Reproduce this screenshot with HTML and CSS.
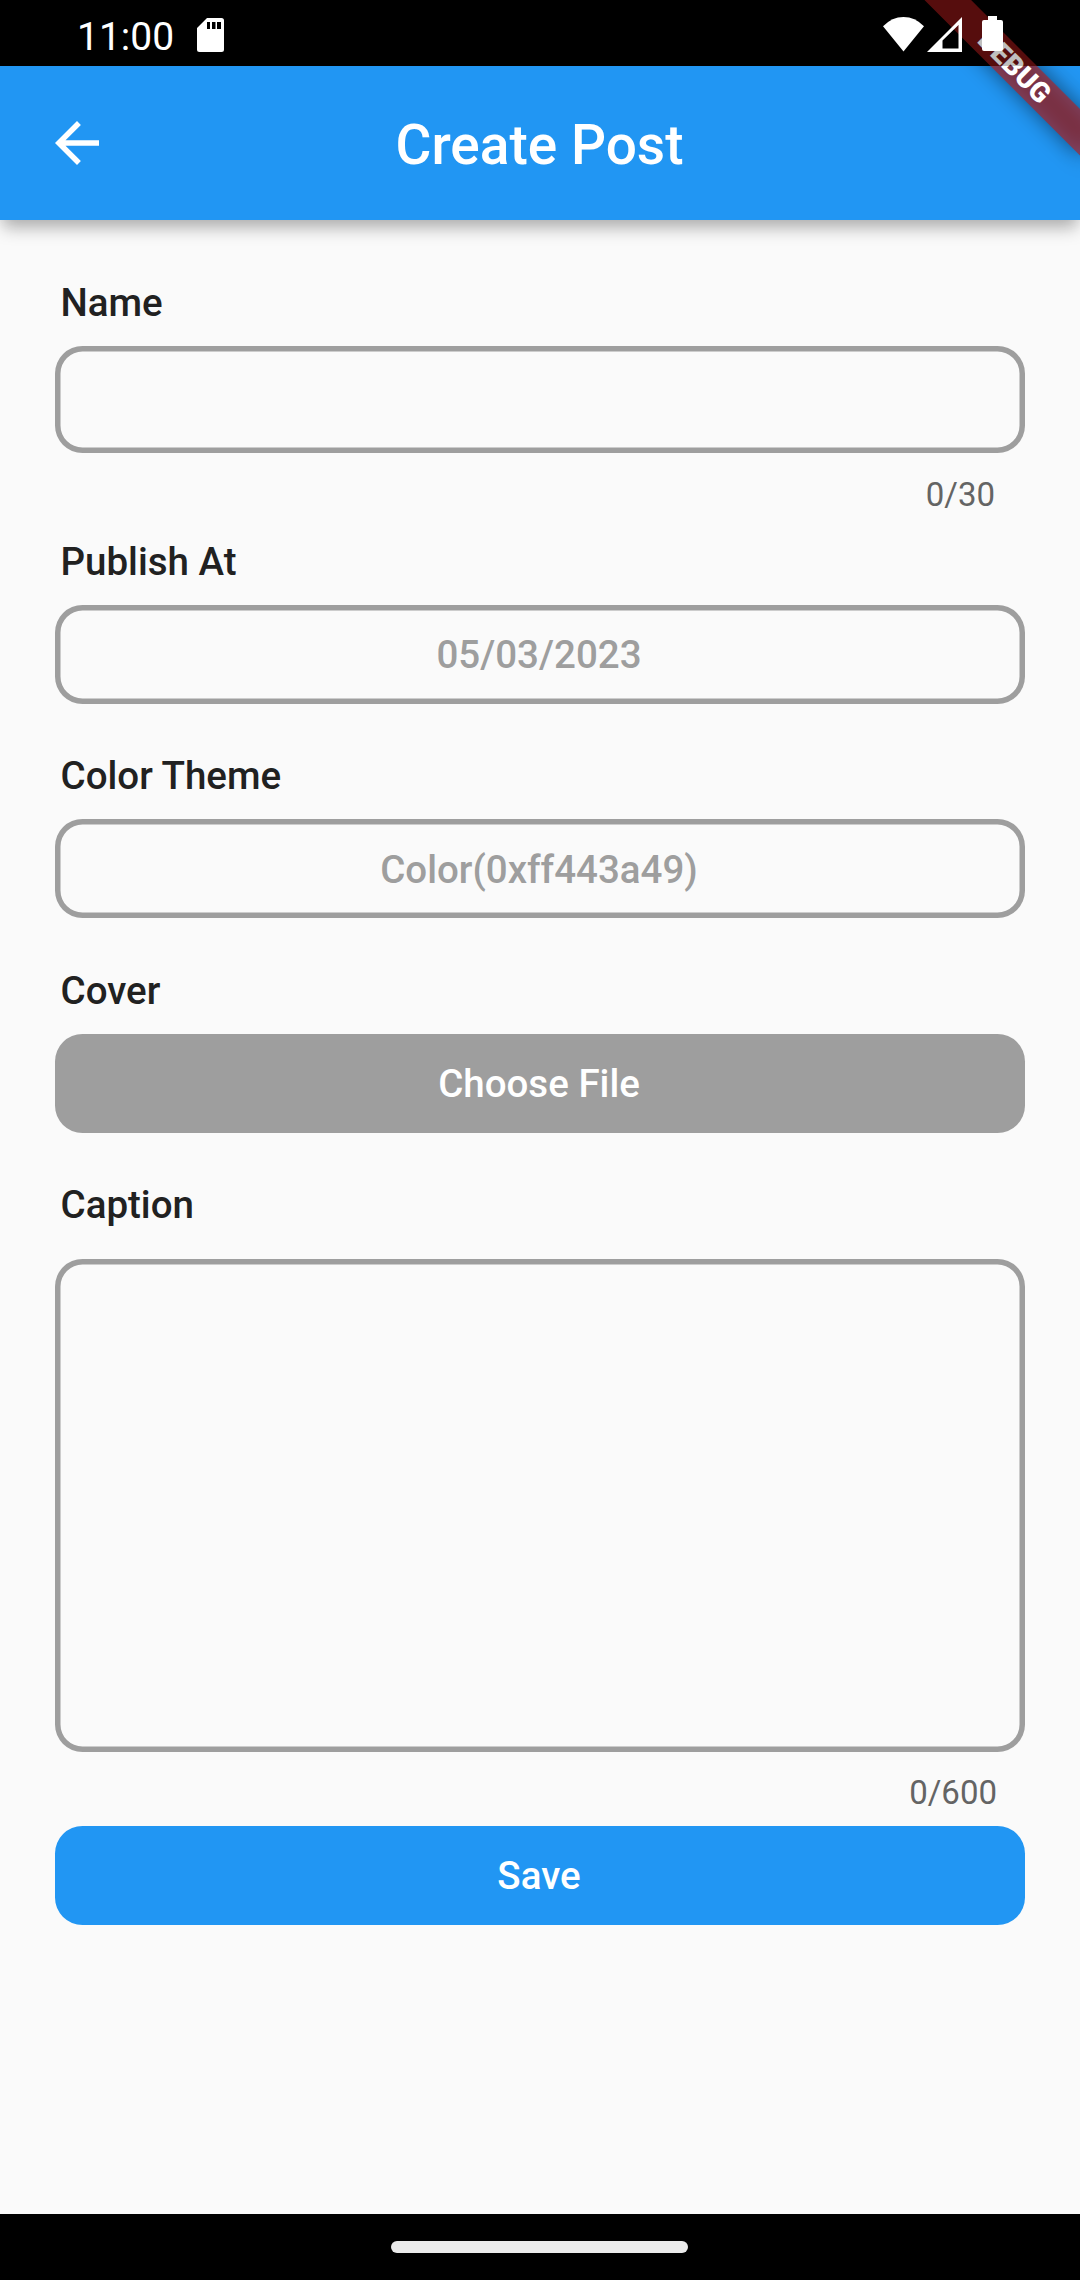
FILE: index.html
```html
<!DOCTYPE html>
<html lang="en">
<head>
<meta charset="utf-8">
<title>Create Post</title>
<link rel="stylesheet" href="styles.css">
</head>
<body>
<div class="screen">
  <div class="status-bar">
    <span class="clock">11:00</span>
    <svg class="sd" width="27" height="34" viewBox="0 0 27 34"><path fill="#fff" fill-rule="evenodd" d="M10 0H24.500Q27 0 27 2.500V31.500Q27 34 24.500 34H2.500Q0 34 0 31.500V10ZM10 4V11H13V4ZM15 4V11H18.500V4ZM20 4V11H24V4Z"/></svg>
    <svg class="wifi" width="41" height="35" viewBox="0 0 41 35"><path fill="#fff" d="M0 9.300Q9 0 20.500 0T41 9.300L20.500 34.500Z"/></svg>
    <svg class="signal" width="35" height="35" viewBox="0 0 35 35"><path fill="#fff" fill-rule="evenodd" d="M0 35L35 0V35ZM15.500 23.500V31.500H31.500V8Z"/></svg>
    <svg class="battery" width="21" height="35" viewBox="0 0 21 35"><path fill="#fff" d="M6 0H15V4H19Q21 4 21 6V33Q21 35 19 35H2Q0 35 0 33V6Q0 4 2 4H6Z"/></svg>
  </div>
  <header class="app-bar">
    <svg class="back" width="66" height="66" viewBox="0 0 24 24"><path fill="#fff" d="M20 11H7.830l5.590-5.590L12 4l-8 8 8 8 1.410-1.410L7.830 13H20v-2z"/></svg>
    <h1 class="title">Create Post</h1>
  </header>
  <main class="form">
    <section class="field">
      <label class="label">Name</label>
      <div class="box box-input"></div>
      <div class="counter">0/30</div>
    </section>
    <section class="field field-date">
      <label class="label">Publish At</label>
      <div class="box">05/03/2023</div>
    </section>
    <section class="field field-color">
      <label class="label">Color Theme</label>
      <div class="box box-color">Color(0xff443a49)</div>
    </section>
    <section class="field field-cover">
      <label class="label">Cover</label>
      <div class="button">Choose File</div>
    </section>
    <section class="field field-caption">
      <label class="label">Caption</label>
      <div class="box box-area"></div>
      <div class="counter counter-area">0/600</div>
    </section>
    <div class="button button-save">Save</div>
  </main>
  <footer class="nav-bar"><div class="pill"></div></footer>
  <div class="banner-clip">
    <div class="banner">
      <div class="banner-shadow"></div>
      <div class="banner-face">DEBUG</div>
    </div>
  </div>
  <div class="status-scrim"></div>
</div>
</body>
</html>
```
FILE: styles.css
```css
* { box-sizing: border-box; }
body { margin: 0; font-family: Roboto, sans-serif; background: #fafafa; }
svg { display: block; }

.screen {
  position: relative;
  display: flex;
  flex-direction: column;
  width: 1080px;
  height: 2280px;
  overflow: hidden;
  background: #fafafa;
}

.status-bar {
  display: flex;
  flex: none;
  align-items: flex-start;
  height: 66px;
  background: #000;
  color: #fff;
}
.clock { width: 120px; margin: 14px 0 0 77px; font-size: 39px; line-height: 46px; }
.status-bar svg { position: relative; z-index: 3; }
.sd { margin-top: 18px; }
.wifi { margin: 17px 0 0 659px; }
.signal { margin: 17px 0 0 3px; }
.battery { margin: 16px 0 0 20px; }

.app-bar {
  display: flex;
  flex: none;
  align-items: center;
  height: 154px;
  padding: 0 111px 0 44px;
  background: #2196f3;
  box-shadow: 0 11px 16px -3px rgba(0, 0, 0, .28), 0 2px 14px rgba(0, 0, 0, .06);
}
.title {
  flex: 1;
  margin: 0;
  padding-top: 4px;
  color: #fff;
  font-size: 55px;
  font-weight: 500;
  line-height: 64px;
  text-align: center;
}

.form { display: flex; flex: 1; flex-direction: column; padding: 60px 55px 0; }
.field { display: flex; flex-direction: column; }
.field-date { height: 214px; }
.field-color { height: 215px; }
.field-cover { height: 214px; }
.label {
  margin: 0 0 21px 5.5px;
  color: #212121;
  font-size: 38.5px;
  font-weight: 500;
  line-height: 45px;
}
.box, .button {
  display: flex;
  flex: none;
  align-items: center;
  justify-content: center;
  height: 99px;
  padding-right: 2px;
  border-radius: 27.5px;
  font-size: 38.5px;
  font-weight: 500;
}
.box { box-shadow: inset 0 0 0 5.5px #9e9e9e; color: #9e9e9e; }
.box-color { padding-top: 2px; }
.button { background: #9e9e9e; color: #fff; }
.box-input { height: 107px; }
.box-area { height: 493px; }
.field-caption .label { margin-bottom: 32px; }
.counter {
  height: 86px;
  padding: 22px 30px 0 0;
  color: #646464;
  font-size: 33px;
  line-height: 39px;
  text-align: right;
}
.counter-area { height: 74px; padding: 21px 28px 0 0; }
.button-save { background: #2196f3; }

.nav-bar {
  display: flex;
  flex: none;
  justify-content: center;
  height: 66px;
  padding: 27px 1px 0 0;
  background: #000;
}
.pill { width: 297px; height: 12px; border-radius: 6px; background: #ebebeb; }

/* Corner ribbon, rotated about the top right corner of the screen */
.banner-clip { position: absolute; top: 0; right: 0; width: 240px; height: 240px; overflow: hidden; }
.banner {
  position: absolute;
  top: 77px;
  left: 130px;
  width: 220px;
  height: 33px;
  transform: rotate(45deg);
  transform-origin: 110px -77px;
}
.banner-shadow { position: absolute; inset: 0; background: rgba(0, 0, 0, .5); filter: blur(10.9px); }
.banner-face {
  position: absolute;
  inset: 0;
  padding-left: 2px;
  background: rgba(183, 28, 28, .627);
  color: #fff;
  font-size: 28px;
  font-weight: 900;
  line-height: 33px;
  text-align: center;
}
.status-scrim { position: absolute; top: 0; left: 840px; width: 240px; height: 66px; background: rgba(0, 0, 0, .25); }
```
